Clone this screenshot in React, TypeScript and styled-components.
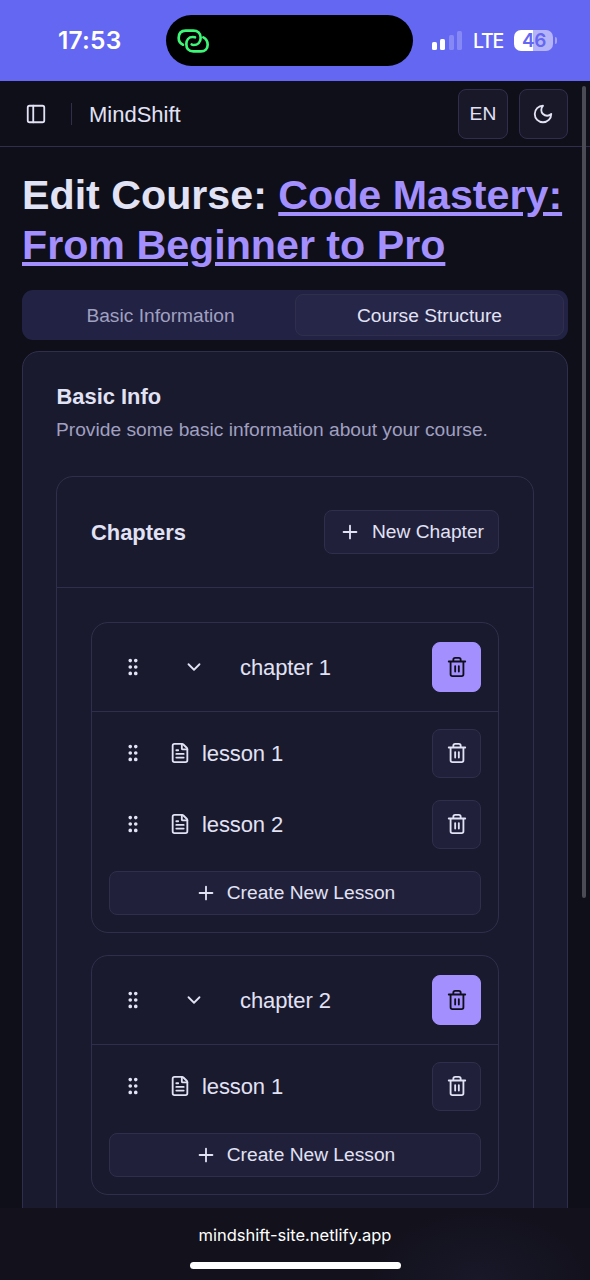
import React from "react";
import styled, { createGlobalStyle, css } from "styled-components";
import { ChevronDown, FileText, GripVertical, PanelLeft, Plus } from "lucide-react";

const c = {
  bg: "#0f0f1a",
  fg: "#e2e2f5",
  card: "#1a1a2e",
  primary: "#a48fff",
  muted: "#222244",
  mutedFg: "#a0a0c0",
  border: "#2f2f4d",
  control: "#20203a",
  status: "#6467f2",
};

const Global = createGlobalStyle`
  * { box-sizing: border-box; }
  body { margin: 0; background: ${c.bg}; }
  button { font: inherit; color: inherit; margin: 0; padding: 0; }
  h1, h2, p { margin: 0; }
`;

const Screen = styled.div`
  position: relative;
  display: flex;
  flex-direction: column;
  width: 590px;
  height: 1280px;
  overflow: hidden;
  background: ${c.bg};
  color: ${c.fg};
  font-family: "Liberation Sans", Arial, sans-serif;
  font-size: 19.2px;
`;

const StatusBar = styled.div`
  flex: none;
  display: flex;
  align-items: center;
  height: 81px;
  padding: 15px 32px 15px 58px;
  background: ${c.status};
  color: #fff;
  font-family: Inter, sans-serif;
`;

const Clock = styled.span`
  width: 108px;
  padding-bottom: 1px;
  font-size: 24.5px;
  font-weight: 600;
  line-height: 30px;
  letter-spacing: 0.2px;
`;

const Island = styled.div`
  display: flex;
  align-items: center;
  width: 247px;
  height: 51px;
  padding-left: 11px;
  border-radius: 26px;
  background: #000;
`;

const Signal = styled.div`
  display: flex;
  align-items: flex-end;
  gap: 3.3px;
  margin: -1px 0 0 19px;
  height: 19px;
`;

const Bar = styled.i<{ $h: number; $dim?: boolean }>`
  width: 5px;
  height: ${(p) => p.$h}px;
  border-radius: 1.6px;
  background: rgba(255, 255, 255, ${(p) => (p.$dim ? 0.22 : 1)});
`;

const Network = styled.span`
  margin-left: 11px;
  width: 31px;
  font-size: 19.5px;
  font-weight: 500;
  letter-spacing: -1.1px;
`;

const Battery = styled.div`
  display: flex;
  align-items: center;
  justify-content: center;
  margin: -1px 0 0 10.5px;
  width: 39px;
  height: 21px;
  border-radius: 7px;
  background: linear-gradient(90deg, #fff 48%, #b6b4f8 48%);
  color: ${c.status};
  font-size: 19px;
  font-weight: 600;
  letter-spacing: -0.6px;
`;

const BatteryTip = styled.i`
  width: 2px;
  height: 7px;
  margin-left: 1.5px;
  border-radius: 0 3px 3px 0;
  background: #a3a2f7;
`;

const Header = styled.header`
  flex: none;
  display: flex;
  align-items: center;
  height: 66px;
  padding: 1px 22px 0 25px;
  border-bottom: 1px solid ${c.border};
`;

const Divider = styled.span`
  width: 1px;
  height: 22px;
  margin: 0 17px 0 24px;
  background: ${c.border};
`;

const Brand = styled.span`
  flex: 1;
  padding-top: 1px;
  font-size: 22px;
  line-height: 30px;
`;

const outline = css`
  border: 1px solid ${c.border};
  background: ${c.control};
`;

const SquareButton = styled.button<{ $variant?: "outline" | "primary" | "header" }>`
  flex: none;
  display: flex;
  align-items: center;
  justify-content: center;
  width: 49.4px;
  height: 49.4px;
  border-radius: 8px;
  ${outline}
  ${(p) => p.$variant === "header" && css`padding-top: 1px; background: #181829; & + & { margin-left: 11px; }`}
  ${(p) => p.$variant === "primary" && css`border-color: ${c.primary}; background: ${c.primary}; color: ${c.bg};`}
`;

const Main = styled.main`
  flex: 1;
  min-height: 0;
  overflow: hidden;
  padding: 23px 22px 0;
`;

const Title = styled.h1`
  font-size: 41.2px;
  line-height: 50px;
  font-weight: 700;
  white-space: nowrap;
`;

const CourseLink = styled.span`
  color: ${c.primary};
  text-decoration: underline;
`;

const Tabs = styled.div`
  display: grid;
  grid-template-columns: 1fr 1fr;
  height: 49.4px;
  margin-top: 20.4px;
  padding: 4px;
  border-radius: 11px;
  background: ${c.muted};
`;

const Tab = styled.button<{ $active?: boolean }>`
  padding-top: 1px;
  border: 1px solid ${(p) => (p.$active ? c.border : "transparent")};
  border-radius: 8px;
  background: ${(p) => (p.$active ? "#262648" : "transparent")};
  color: ${(p) => (p.$active ? c.fg : c.mutedFg)};
`;

const Card = styled.section`
  margin-top: 11.2px;
  padding: 33px 33px 0;
  height: 1200px;
  border: 1px solid ${c.border};
  border-radius: 17px;
  background: ${c.card};
`;

const Heading = styled.h2`
  padding-left: 0.5px;
  font-size: 21.9px;
  line-height: 24px;
  font-weight: 700;
`;

const Hint = styled.p`
  margin-top: 7px;
  line-height: 27px;
  color: ${c.mutedFg};
`;

const ChaptersPanel = styled.section`
  margin-top: 33px;
  height: 1000px;
  border: 1px solid ${c.border};
  border-radius: 17px;
`;

const PanelHeader = styled.div`
  display: flex;
  align-items: center;
  justify-content: space-between;
  height: 111px;
  padding: 0 34px;
  border-bottom: 1px solid ${c.border};

  ${Heading} {
    padding: 2px 0 0;
  }
`;

const TextButton = styled.button<{ $full?: boolean }>`
  display: flex;
  align-items: center;
  justify-content: center;
  gap: ${(p) => (p.$full ? 10 : 11)}px;
  width: ${(p) => (p.$full ? "100%" : "175px")};
  height: 44px;
  border-radius: 8px;
  ${outline}

  span {
    padding-top: 1px;
  }
`;

const ChapterList = styled.div`
  display: flex;
  flex-direction: column;
  gap: 22.6px;
  padding: 34px;
`;

const ChapterCard = styled.article`
  border: 1px solid ${c.border};
  border-radius: 17px;
`;

const ChapterHeader = styled.div`
  display: flex;
  align-items: center;
  height: 89px;
  padding: 0 16.6px 0 30px;
  border-bottom: 1px solid ${c.border};
`;

const ChapterName = styled.span`
  flex: 1;
  margin-left: 35px;
  padding-top: 2px;
  font-size: 22px;
  letter-spacing: -0.1px;
`;

const Lessons = styled.div`
  display: flex;
  flex-direction: column;
  gap: 21.8px;
  padding: 16.6px;
`;

const LessonRow = styled.div`
  display: flex;
  align-items: center;
  height: 49.4px;
  padding-left: 13.4px;
`;

const LessonName = styled.span`
  flex: 1;
  margin-left: 11px;
  padding-top: 2px;
  font-size: 22px;
  letter-spacing: -0.1px;
`;

const IconSlot = styled.span<{ $left?: number }>`
  display: flex;
  margin-left: ${(p) => p.$left ?? 0}px;
`;

const BottomBar = styled.footer`
  flex: none;
  display: flex;
  flex-direction: column;
  align-items: center;
  height: 72px;
  padding-top: 16px;
  background: radial-gradient(ellipse 110px 70px at 480px 72px, #191829, transparent), #12111c;
  color: #fff;
  font-family: Inter, sans-serif;
  font-size: 16.5px;
  line-height: 22px;
`;

const HomeIndicator = styled.i`
  width: 211px;
  height: 7px;
  margin-top: 16px;
  border-radius: 4px;
  background: #fff;
`;

const ScrollThumb = styled.i`
  position: absolute;
  top: 86px;
  right: 4px;
  width: 4px;
  height: 812px;
  border-radius: 2px;
  background: #4b4b56;
`;

const LinkedRings = () => (
  <svg width="32" height="26" viewBox="0 0 96 78" fill="none" stroke="#3df777" strokeWidth="8" strokeLinecap="round">
    <path d="M18 50C9 46 5 39 5 30C5 16 13 8 26 8H49C62 8 71 16 71 29C71 42 62 51 50 51C47 51 45 50 44 49" />
    <path d="M54 28C51 27 50 27 47 27C35 27 28 36 28 48C28 62 36 70 49 70H72C84 70 92 62 92 50C92 40 87 32 79 28" />
  </svg>
);

const strokeProps = {
  width: 22,
  height: 22,
  viewBox: "0 0 24 24",
  fill: "none",
  stroke: "currentColor",
  strokeWidth: 2,
  strokeLinecap: "round" as const,
  strokeLinejoin: "round" as const,
};

const MoonIcon = () => (
  <svg {...strokeProps}>
    <path d="M12 3a6 6 0 0 0 9 9 9 9 0 1 1-9-9Z" />
  </svg>
);

const TrashIcon = () => (
  <svg {...strokeProps}>
    <path d="M3 6h18M19 6v14c0 1-1 2-2 2H7c-1 0-2-1-2-2V6M8 6V4c0-1 1-2 2-2h4c1 0 2 1 2 2v2M10 11v6M14 11v6" />
  </svg>
);

const chapters = [
  { name: "chapter 1", lessons: ["lesson 1", "lesson 2"] },
  { name: "chapter 2", lessons: ["lesson 1"] },
];

const Chapter = ({ name, lessons }: { name: string; lessons: string[] }) => (
  <ChapterCard>
    <ChapterHeader>
      <IconSlot><GripVertical size={22} /></IconSlot>
      <IconSlot $left={39}><ChevronDown size={22} /></IconSlot>
      <ChapterName>{name}</ChapterName>
      <SquareButton $variant="primary"><TrashIcon /></SquareButton>
    </ChapterHeader>
    <Lessons>
      {lessons.map((lesson) => (
        <LessonRow key={lesson}>
          <IconSlot><GripVertical size={22} /></IconSlot>
          <IconSlot $left={25}><FileText size={22} /></IconSlot>
          <LessonName>{lesson}</LessonName>
          <SquareButton><TrashIcon /></SquareButton>
        </LessonRow>
      ))}
      <TextButton $full><Plus size={22} /><span>Create New Lesson</span></TextButton>
    </Lessons>
  </ChapterCard>
);

export default function App() {
  return (
    <Screen>
      <Global />
      <StatusBar>
        <Clock>17:53</Clock>
        <Island><LinkedRings /></Island>
        <Signal>
          <Bar $h={8} />
          <Bar $h={11} />
          <Bar $h={15} $dim />
          <Bar $h={19} $dim />
        </Signal>
        <Network>LTE</Network>
        <Battery>46</Battery>
        <BatteryTip />
      </StatusBar>
      <Header>
        <PanelLeft size={22} />
        <Divider />
        <Brand>MindShift</Brand>
        <SquareButton $variant="header">EN</SquareButton>
        <SquareButton $variant="header"><MoonIcon /></SquareButton>
      </Header>
      <Main>
        <Title>
          Edit Course: <CourseLink>Code Mastery:<br />From Beginner to Pro</CourseLink>
        </Title>
        <Tabs>
          <Tab>Basic Information</Tab>
          <Tab $active>Course Structure</Tab>
        </Tabs>
        <Card>
          <Heading>Basic Info</Heading>
          <Hint>Provide some basic information about your course.</Hint>
          <ChaptersPanel>
            <PanelHeader>
              <Heading>Chapters</Heading>
              <TextButton><Plus size={22} /><span>New Chapter</span></TextButton>
            </PanelHeader>
            <ChapterList>
              {chapters.map((chapter) => <Chapter key={chapter.name} {...chapter} />)}
            </ChapterList>
          </ChaptersPanel>
        </Card>
      </Main>
      <BottomBar>
        mindshift-site.netlify.app
        <HomeIndicator />
      </BottomBar>
      <ScrollThumb />
    </Screen>
  );
}
